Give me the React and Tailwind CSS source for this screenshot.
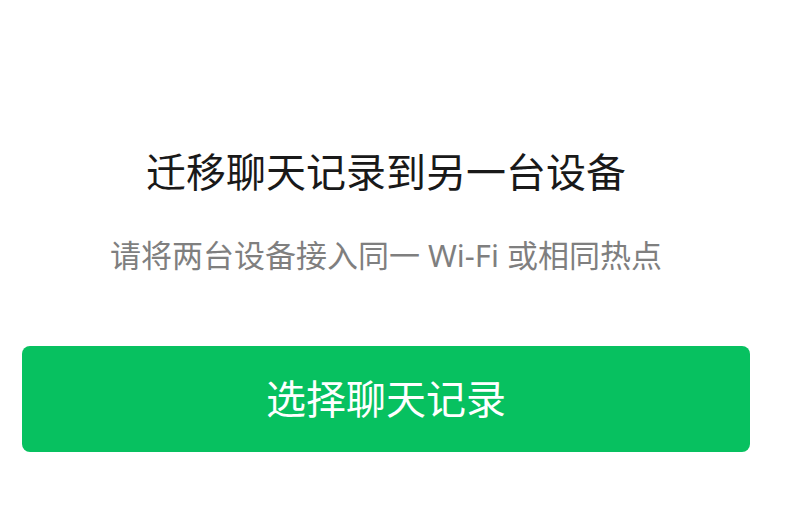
export default function App() {
  return (
    <div
      className="h-[523px] w-[785px] bg-white pl-[22px] pr-[35px]"
      style={{ fontFamily: '"Noto Sans", "Noto Sans CJK SC", sans-serif' }}
    >
      <div className="flex flex-col items-center">
        <h1 className="mt-[148px] text-[40px] leading-[48px] font-normal text-[#191919]">
          迁移聊天记录到另一台设备
        </h1>
        <p className="mt-[39px] text-[31px] leading-[40px] text-[#7f7f7f]">
          请将两台设备接入同一 Wi-Fi 或相同热点
        </p>
        <button
          type="button"
          className="mt-[71px] flex h-[106px] w-full items-center justify-center rounded-[8px] bg-[#07c160] text-[40px] text-white"
        >
          选择聊天记录
        </button>
      </div>
    </div>
  );
}
